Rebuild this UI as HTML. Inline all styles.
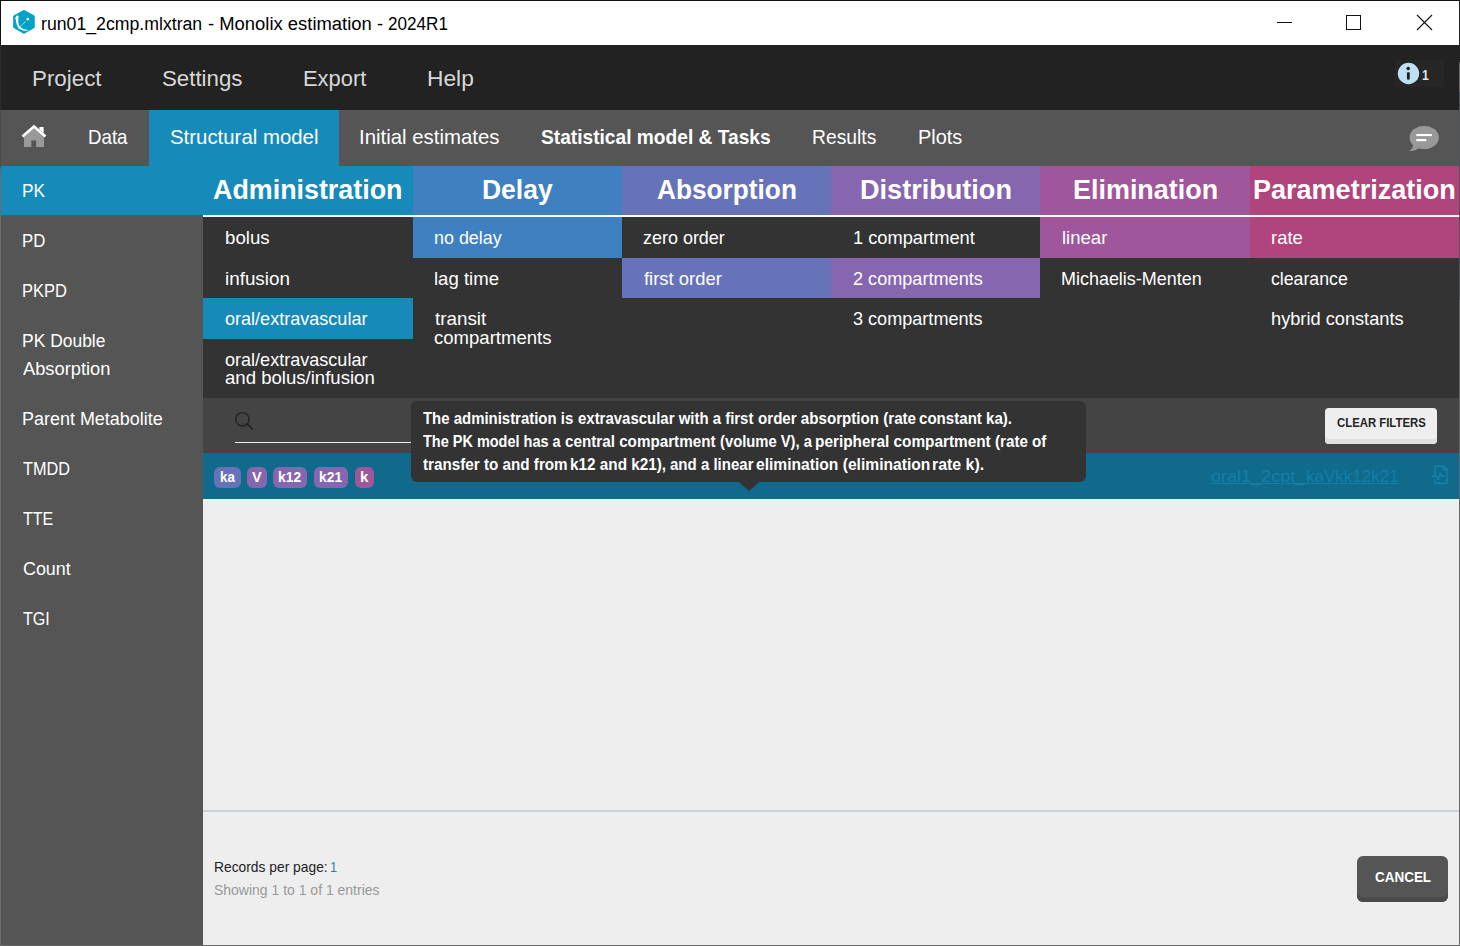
<!DOCTYPE html>
<html lang="en"><head><meta charset="utf-8"><title>run01_2cmp.mlxtran - Monolix estimation - 2024R1</title>
<style>
html,body{margin:0;padding:0;}
body{width:1460px;height:946px;overflow:hidden;background:#eee;font-family:"Liberation Sans", sans-serif;}
#win{position:relative;width:1460px;height:946px;overflow:hidden;background:#eee;}
#win>div,#win>svg,#win>span{position:absolute;}
.t{white-space:nowrap;transform-origin:0 0;display:block;}
</style></head><body><div id="win">
<div style="left:0px;top:0px;width:1460px;height:1px;background:#111;"></div>
<div class=titlebar style="left:1px;top:1px;width:1458px;height:44px;background:#fff;"></div>
<svg style="left:10px;top:7px" width="30" height="30" viewBox="0 0 30 30">
<polygon points="13.95,3.4 24.2,8.9 24.2,20.6 13.95,26.4 3.7,20.6 3.7,8.9" fill="#00a3c7" stroke="#00a3c7" stroke-width="1" stroke-linejoin="round"/>
<path d="M6.2,9.3 C6.6,8.2 8.6,8.2 8.6,9.7 C7.8,14 8.2,17.5 10.2,20.1 C12.5,22.2 15.5,22.9 18.7,23.4 C14.8,24.3 11,23.3 8.7,20.9 C6.4,18 5.6,14.6 5.9,11.7 L4.6,12.4 Z" fill="#fff"/>
<path d="M7.9,21.9 L15.6,14.5" stroke="#fff" stroke-width="1" stroke-dasharray="1.1 0.6" fill="none"/>
<circle cx="17.8" cy="12.2" r="1.35" fill="#fff"/>
</svg>
<span class="t" style="left:41.00px;top:16.10px;font-size:17.6px;line-height:17.6px;color:#000;transform:scale(1.0051,1);">run01_2cmp.mlxtran</span>
<span class="t" style="left:208.00px;top:16.10px;font-size:17.6px;line-height:17.6px;color:#000;transform:scale(1.0471,1);">- Monolix estimation -</span>
<span class="t" style="left:388.00px;top:16.10px;font-size:17.6px;line-height:17.6px;color:#000;transform:scale(0.9718,1);">2024R1</span>
<div style="left:1277px;top:22px;width:15px;height:1px;background:#111;"></div>
<div style="left:1346px;top:15px;width:15px;height:15px;background:transparent;border:1px solid #111;box-sizing:border-box"></div>
<svg style="left:1416px;top:14px" width="17" height="17" viewBox="0 0 17 17"><path d="M1,1 L16,16 M16,1 L1,16" stroke="#111" stroke-width="1.1" fill="none"/></svg>
<div class=menubar style="left:1px;top:45px;width:1458px;height:65px;background:#222;"></div>
<span class="t" style="left:32.00px;top:68.38px;font-size:22px;line-height:22px;color:#d8d8d8;transform:scale(1.0163,1);">Project</span>
<span class="t" style="left:162.00px;top:68.38px;font-size:22px;line-height:22px;color:#d8d8d8;transform:scale(1.0123,1);">Settings</span>
<span class="t" style="left:303.00px;top:68.38px;font-size:22px;line-height:22px;color:#d8d8d8;transform:scale(0.9949,1);">Export</span>
<span class="t" style="left:427.00px;top:68.38px;font-size:22px;line-height:22px;color:#d8d8d8;transform:scale(1.0354,1);">Help</span>
<div style="left:1395px;top:60px;width:49px;height:27px;background:#262626;"></div>
<svg style="left:1396px;top:61px" width="25" height="25" viewBox="0 0 25 25">
<circle cx="12.5" cy="12.5" r="11.4" fill="#1b1b1b"/>
<circle cx="12.5" cy="12.5" r="10.7" fill="#bfe0f2"/>
<circle cx="12.2" cy="7.5" r="1.75" fill="#1c1c1c"/>
<path d="M10.9,11.6 Q12.3,11 13.8,11.6 L13.7,18.3 Q12.3,19.2 11,18.3 Z" fill="#1c1c1c"/>
</svg>
<span class="t" style="left:1422.00px;top:66.88px;font-size:15.5px;line-height:15.5px;color:#e4e4e4;transform:scale(0.7839,1);font-weight:bold;">1</span>
<div class=tabbar style="left:1px;top:110px;width:1458px;height:56px;background:#555;"></div>
<div style="left:149px;top:110px;width:190px;height:56px;background:#168bb9;"></div>
<svg style="left:20px;top:123px" width="28" height="26" viewBox="0 0 28 26">
<path d="M4,13.2 L14,4.6 L24,13.2 V24 H16.2 V17.4 H11.3 V24 H4 Z" fill="#999"/>
<path d="M2.5,13.5 L14,3.5 L25.5,13.5" stroke="#fff" stroke-width="2.6" fill="none" stroke-linejoin="miter"/>
<path d="M19.4,3.9 H23.6 V10 L19.4,6.4 Z" fill="#fff"/>
</svg>
<span class="t" style="left:88.00px;top:126.90px;font-size:20.2px;line-height:20.2px;color:#fff;transform:scale(0.9257,1);">Data</span>
<span class="t" style="left:170.00px;top:126.90px;font-size:20.2px;line-height:20.2px;color:#fff;transform:scale(1.0102,1);">Structural model</span>
<span class="t" style="left:359.00px;top:126.90px;font-size:20.2px;line-height:20.2px;color:#fff;transform:scale(1.0091,1);">Initial estimates</span>
<span class="t" style="left:541.00px;top:126.90px;font-size:20.2px;line-height:20.2px;color:#fff;transform:scale(0.9489,1);font-weight:bold;">Statistical model &amp; Tasks</span>
<span class="t" style="left:812.00px;top:126.90px;font-size:20.2px;line-height:20.2px;color:#fff;transform:scale(0.9550,1);">Results</span>
<span class="t" style="left:918.00px;top:126.90px;font-size:20.2px;line-height:20.2px;color:#fff;transform:scale(0.9874,1);">Plots</span>
<svg style="left:1406px;top:123px" width="36" height="30" viewBox="0 0 36 30">
<ellipse cx="18.2" cy="14.5" rx="14.6" ry="11.6" fill="#999"/>
<path d="M7.5,21 C7.2,24.5 5.6,26.6 3.2,27.9 C7.6,28.2 10.8,27.2 13.4,24.6 Z" fill="#999"/>
<rect x="10.3" y="11" width="15.6" height="2.1" fill="#fff"/>
<rect x="10.3" y="16" width="10" height="2.2" fill="#fff"/>
</svg>
<div class=sidebar style="left:1px;top:166px;width:202px;height:779px;background:#555;"></div>
<div style="left:1px;top:166px;width:202px;height:49px;background:#168bb9;"></div>
<span class="t" style="left:22.00px;top:181.51px;font-size:18.3px;line-height:18.3px;color:#fff;transform:scale(0.9444,1);">PK</span>
<span class="t" style="left:22.00px;top:231.51px;font-size:18.3px;line-height:18.3px;color:#fff;transform:scale(0.9181,1);">PD</span>
<span class="t" style="left:22.00px;top:281.51px;font-size:18.3px;line-height:18.3px;color:#fff;transform:scale(0.9016,1);">PKPD</span>
<span class="t" style="left:22.00px;top:331.51px;font-size:18.3px;line-height:18.3px;color:#fff;transform:scale(0.9546,1);">PK Double</span>
<span class="t" style="left:23.00px;top:359.51px;font-size:18.3px;line-height:18.3px;color:#fff;transform:scale(0.9999,1);">Absorption</span>
<span class="t" style="left:22.00px;top:409.51px;font-size:18.3px;line-height:18.3px;color:#fff;transform:scale(0.9820,1);">Parent Metabolite</span>
<span class="t" style="left:23.00px;top:459.51px;font-size:18.3px;line-height:18.3px;color:#fff;transform:scale(0.8891,1);">TMDD</span>
<span class="t" style="left:23.00px;top:509.51px;font-size:18.3px;line-height:18.3px;color:#fff;transform:scale(0.8761,1);">TTE</span>
<span class="t" style="left:23.00px;top:559.51px;font-size:18.3px;line-height:18.3px;color:#fff;transform:scale(0.9774,1);">Count</span>
<span class="t" style="left:23.00px;top:609.51px;font-size:18.3px;line-height:18.3px;color:#fff;transform:scale(0.8810,1);">TGI</span>
<div style="left:203px;top:166px;width:210px;height:49px;background:#168bb9;"></div>
<span class="t" style="left:213.00px;top:177.31px;font-size:26.8px;line-height:26.8px;color:#fff;transform:scale(1.0021,1);font-weight:bold;">Administration</span>
<div style="left:413px;top:166px;width:209px;height:49px;background:#3e80c0;"></div>
<span class="t" style="left:482.00px;top:177.31px;font-size:26.8px;line-height:26.8px;color:#fff;transform:scale(0.9872,1);font-weight:bold;">Delay</span>
<div style="left:622px;top:166px;width:209px;height:49px;background:#6673b9;"></div>
<span class="t" style="left:657.00px;top:177.31px;font-size:26.8px;line-height:26.8px;color:#fff;transform:scale(0.9791,1);font-weight:bold;">Absorption</span>
<div style="left:831px;top:166px;width:209px;height:49px;background:#8766b0;"></div>
<span class="t" style="left:860.00px;top:177.31px;font-size:26.8px;line-height:26.8px;color:#fff;transform:scale(1.0105,1);font-weight:bold;">Distribution</span>
<div style="left:1040px;top:166px;width:210px;height:49px;background:#a0569a;"></div>
<span class="t" style="left:1073.00px;top:177.31px;font-size:26.8px;line-height:26.8px;color:#fff;transform:scale(1.0051,1);font-weight:bold;">Elimination</span>
<div style="left:1250px;top:166px;width:209px;height:49px;background:#b0447c;"></div>
<span class="t" style="left:1253.00px;top:177.31px;font-size:26.8px;line-height:26.8px;color:#fff;transform:scale(1.0084,1);font-weight:bold;">Parametrization</span>
<div style="left:203px;top:215px;width:1256px;height:2px;background:#fff;"></div>
<div class=options style="left:203px;top:217px;width:1256px;height:181px;background:#333;"></div>
<div style="left:203px;top:298px;width:210px;height:41px;background:#168bb9;"></div>
<div style="left:413px;top:217px;width:209px;height:41px;background:#3e80c0;"></div>
<div style="left:622px;top:258px;width:209px;height:40px;background:#6673b9;"></div>
<div style="left:831px;top:258px;width:209px;height:40px;background:#8766b0;"></div>
<div style="left:1040px;top:217px;width:210px;height:41px;background:#a0569a;"></div>
<div style="left:1250px;top:217px;width:209px;height:41px;background:#b0447c;"></div>
<span class="t" style="left:225.00px;top:229.34px;font-size:18.5px;line-height:18.5px;color:#fff;transform:scale(1.0098,1);">bolus</span>
<span class="t" style="left:225.00px;top:270.34px;font-size:18.5px;line-height:18.5px;color:#fff;transform:scale(1.0183,1);">infusion</span>
<span class="t" style="left:225.00px;top:310.34px;font-size:18.5px;line-height:18.5px;color:#fff;transform:scale(0.9756,1);">oral/extravascular</span>
<span class="t" style="left:225.00px;top:351.34px;font-size:18.5px;line-height:18.5px;color:#fff;transform:scale(0.9756,1);">oral/extravascular</span>
<span class="t" style="left:225.00px;top:369.34px;font-size:18.5px;line-height:18.5px;color:#fff;transform:scale(1.0039,1);">and bolus/infusion</span>
<span class="t" style="left:434.00px;top:229.34px;font-size:18.5px;line-height:18.5px;color:#fff;transform:scale(0.9684,1);">no delay</span>
<span class="t" style="left:434.00px;top:270.34px;font-size:18.5px;line-height:18.5px;color:#fff;transform:scale(1.0026,1);">lag time</span>
<span class="t" style="left:435.00px;top:310.34px;font-size:18.5px;line-height:18.5px;color:#fff;transform:scale(1.0177,1);">transit</span>
<span class="t" style="left:434.00px;top:329.34px;font-size:18.5px;line-height:18.5px;color:#fff;transform:scale(1.0022,1);">compartments</span>
<span class="t" style="left:643.00px;top:229.34px;font-size:18.5px;line-height:18.5px;color:#fff;transform:scale(0.9704,1);">zero order</span>
<span class="t" style="left:644.00px;top:270.34px;font-size:18.5px;line-height:18.5px;color:#fff;transform:scale(0.9955,1);">first order</span>
<span class="t" style="left:853.00px;top:229.34px;font-size:18.5px;line-height:18.5px;color:#fff;transform:scale(0.9869,1);">1 compartment</span>
<span class="t" style="left:853.00px;top:270.34px;font-size:18.5px;line-height:18.5px;color:#fff;transform:scale(0.9785,1);">2 compartments</span>
<span class="t" style="left:853.00px;top:310.34px;font-size:18.5px;line-height:18.5px;color:#fff;transform:scale(0.9773,1);">3 compartments</span>
<span class="t" style="left:1062.00px;top:229.34px;font-size:18.5px;line-height:18.5px;color:#fff;transform:scale(1.0011,1);">linear</span>
<span class="t" style="left:1061.00px;top:270.34px;font-size:18.5px;line-height:18.5px;color:#fff;transform:scale(0.9703,1);">Michaelis-Menten</span>
<span class="t" style="left:1271.00px;top:229.34px;font-size:18.5px;line-height:18.5px;color:#fff;transform:scale(0.9960,1);">rate</span>
<span class="t" style="left:1271.00px;top:270.34px;font-size:18.5px;line-height:18.5px;color:#fff;transform:scale(0.9566,1);">clearance</span>
<span class="t" style="left:1271.00px;top:310.34px;font-size:18.5px;line-height:18.5px;color:#fff;transform:scale(0.9843,1);">hybrid constants</span>
<div class=searchrow style="left:203px;top:398px;width:1256px;height:55px;background:#444;"></div>
<svg style="left:232px;top:409px" width="24" height="24" viewBox="0 0 24 24">
<circle cx="10.4" cy="10.3" r="6.7" stroke="#222" stroke-width="1.4" fill="none"/>
<path d="M15.3,15.2 L20.4,20.1" stroke="#222" stroke-width="1.7" stroke-linecap="round"/>
</svg>
<div style="left:235px;top:441.5px;width:300px;height:1.5px;background:#eee;"></div>
<div style="left:1325px;top:408px;width:112px;height:36px;background:#eee;border-radius:4px;box-shadow:inset 0 -5px 0 #e0e0e0"></div>
<span class="t" style="left:1337.00px;top:416.00px;font-size:13px;line-height:13px;color:#222;transform:scale(0.8735,1);font-weight:bold;">CLEAR FILTERS</span>
<div class=resultrow style="left:203px;top:453px;width:1256px;height:46px;background:#106a8c;"></div>
<div style="left:214.2px;top:467px;width:26.7px;height:21px;background:#6673b9;border-radius:6px"></div>
<div style="left:246.9px;top:467px;width:20.0px;height:21px;background:#8766b0;border-radius:6px"></div>
<div style="left:272.9px;top:467px;width:33.9px;height:21px;background:#8766b0;border-radius:6px"></div>
<div style="left:314px;top:467px;width:33.9px;height:21px;background:#8766b0;border-radius:6px"></div>
<div style="left:355.1px;top:467px;width:18.8px;height:21px;background:#a0569a;border-radius:6px"></div>
<span class="t" style="left:1211.00px;top:468.44px;font-size:17.2px;line-height:17.2px;color:#147ea8;transform:scale(1.0488,1);text-decoration:underline">oral1_2cpt_</span>
<span class="t" style="left:1306.00px;top:468.44px;font-size:17.2px;line-height:17.2px;color:#147ea8;transform:scale(0.9909,1);text-decoration:underline">kaVkk12k21</span>
<svg style="left:1430px;top:464px" width="20" height="22" viewBox="0 0 20 22">
<path d="M4.9,11.2 V3 Q4.9,1.95 5.9,1.95 H13.4 L17.05,5.6 V18.3 Q17.05,19.35 16,19.35 H5.9 Q4.9,19.35 4.9,18.3 V15.2" stroke="#1682ad" stroke-width="1.5" fill="none" stroke-linejoin="round"/>
<path d="M13.2,2.2 V5.9 H16.9" stroke="#1682ad" stroke-width="1.4" fill="none"/>
<path d="M1.7,12.2 H6.7 L8.3,15.6 L10.5,9.2 L11.8,12.2 H15" stroke="#1682ad" stroke-width="1.4" fill="none" stroke-linejoin="round"/>
</svg>
<div class=tooltip style="left:411px;top:401px;width:675px;height:80.5px;background:#333;border-radius:6px"></div>
<svg style="left:737px;top:481px" width="24" height="11" viewBox="0 0 24 11"><path d="M0.4,0 H23.6 L12.6,9.5 Q12,10 11.4,9.5 Z" fill="#333"/></svg>
<span class="t" style="left:423.00px;top:411.46px;font-size:16px;line-height:16px;color:#fff;transform:scale(0.9334,1);font-weight:bold;">The administration is</span>
<span class="t" style="left:578.00px;top:411.46px;font-size:16px;line-height:16px;color:#fff;transform:scale(0.9349,1);font-weight:bold;">extravascular with a first</span>
<span class="t" style="left:758.00px;top:411.46px;font-size:16px;line-height:16px;color:#fff;transform:scale(0.9455,1);font-weight:bold;">order absorption (rate</span>
<span class="t" style="left:919.00px;top:411.46px;font-size:16px;line-height:16px;color:#fff;transform:scale(0.9429,1);font-weight:bold;">constant ka).</span>
<span class="t" style="left:423.00px;top:434.46px;font-size:16px;line-height:16px;color:#fff;transform:scale(0.9049,1);font-weight:bold;">The PK model has a</span>
<span class="t" style="left:565.00px;top:434.46px;font-size:16px;line-height:16px;color:#fff;transform:scale(0.9513,1);font-weight:bold;">central compartment</span>
<span class="t" style="left:720.00px;top:434.46px;font-size:16px;line-height:16px;color:#fff;transform:scale(0.9234,1);font-weight:bold;">(volume V), a</span>
<span class="t" style="left:815.00px;top:434.46px;font-size:16px;line-height:16px;color:#fff;transform:scale(0.9594,1);font-weight:bold;">peripheral compartment</span>
<span class="t" style="left:995.00px;top:434.46px;font-size:16px;line-height:16px;color:#fff;transform:scale(0.9473,1);font-weight:bold;">(rate of</span>
<span class="t" style="left:423.00px;top:457.46px;font-size:16px;line-height:16px;color:#fff;transform:scale(0.9515,1);font-weight:bold;">transfer to and from</span>
<span class="t" style="left:570.00px;top:457.46px;font-size:16px;line-height:16px;color:#fff;transform:scale(0.9563,1);font-weight:bold;">k12 and k21),</span>
<span class="t" style="left:670.00px;top:457.46px;font-size:16px;line-height:16px;color:#fff;transform:scale(0.9391,1);font-weight:bold;">and a linear</span>
<span class="t" style="left:756.00px;top:457.46px;font-size:16px;line-height:16px;color:#fff;transform:scale(0.9757,1);font-weight:bold;">elimination (elimination</span>
<span class="t" style="left:932.00px;top:457.46px;font-size:16px;line-height:16px;color:#fff;transform:scale(0.9938,1);font-weight:bold;">rate k).</span>
<div style="left:203px;top:810px;width:1256px;height:2px;background:#c9d1d9;"></div>
<span class="t" style="left:214.00px;top:859.30px;font-size:15px;line-height:15px;color:#222;transform:scale(0.9213,1);">Records per page:</span>
<span class="t" style="left:330.00px;top:859.30px;font-size:15px;line-height:15px;color:#1a88b6;transform:scale(0.8513,1);">1</span>
<span class="t" style="left:214.00px;top:882.30px;font-size:15px;line-height:15px;color:#999;transform:scale(0.9319,1);">Showing 1 to 1 of 1 entries</span>
<div style="left:1357px;top:856px;width:91px;height:46px;background:#555;border-radius:6px;box-shadow:inset 0 -5px 0 #4a4a4a"></div>
<span class="t" style="left:1375.00px;top:868.88px;font-size:15.5px;line-height:15.5px;color:#fff;transform:scale(0.8686,1);font-weight:bold;">CANCEL</span>
<div style="left:0px;top:0px;width:1px;height:946px;background:linear-gradient(#111 0,#111 46px,#2c2c2c 46px,#2c2c2c 110px,#4a4a4a 110px,#4a4a4a 166px,#6c6c6c 170px,#6c6c6c 100%);"></div>
<div style="left:1459px;top:0px;width:1px;height:946px;background:linear-gradient(#222 0,#222 62px,#6a6a6a 62px,#6a6a6a 92px,#4c5659 92px,#4c5659 300px,#666 300px,#666 100%);"></div>
<div style="left:0px;top:945px;width:1460px;height:1px;background:#686868;"></div>
<span class="t" style="left:220.00px;top:471.32px;font-size:13.8px;line-height:13.8px;color:#fff;transform:scale(0.9677,1);font-weight:bold;">ka</span>
<span class="t" style="left:252.00px;top:471.32px;font-size:13.8px;line-height:13.8px;color:#fff;transform:scale(1.0485,1);font-weight:bold;">V</span>
<span class="t" style="left:278.00px;top:471.32px;font-size:13.8px;line-height:13.8px;color:#fff;transform:scale(1.0036,1);font-weight:bold;">k12</span>
<span class="t" style="left:319.00px;top:471.32px;font-size:13.8px;line-height:13.8px;color:#fff;transform:scale(1.0028,1);font-weight:bold;">k21</span>
<span class="t" style="left:360.00px;top:471.32px;font-size:13.8px;line-height:13.8px;color:#fff;transform:scale(1.1001,1);font-weight:bold;">k</span>
</div></body></html>
